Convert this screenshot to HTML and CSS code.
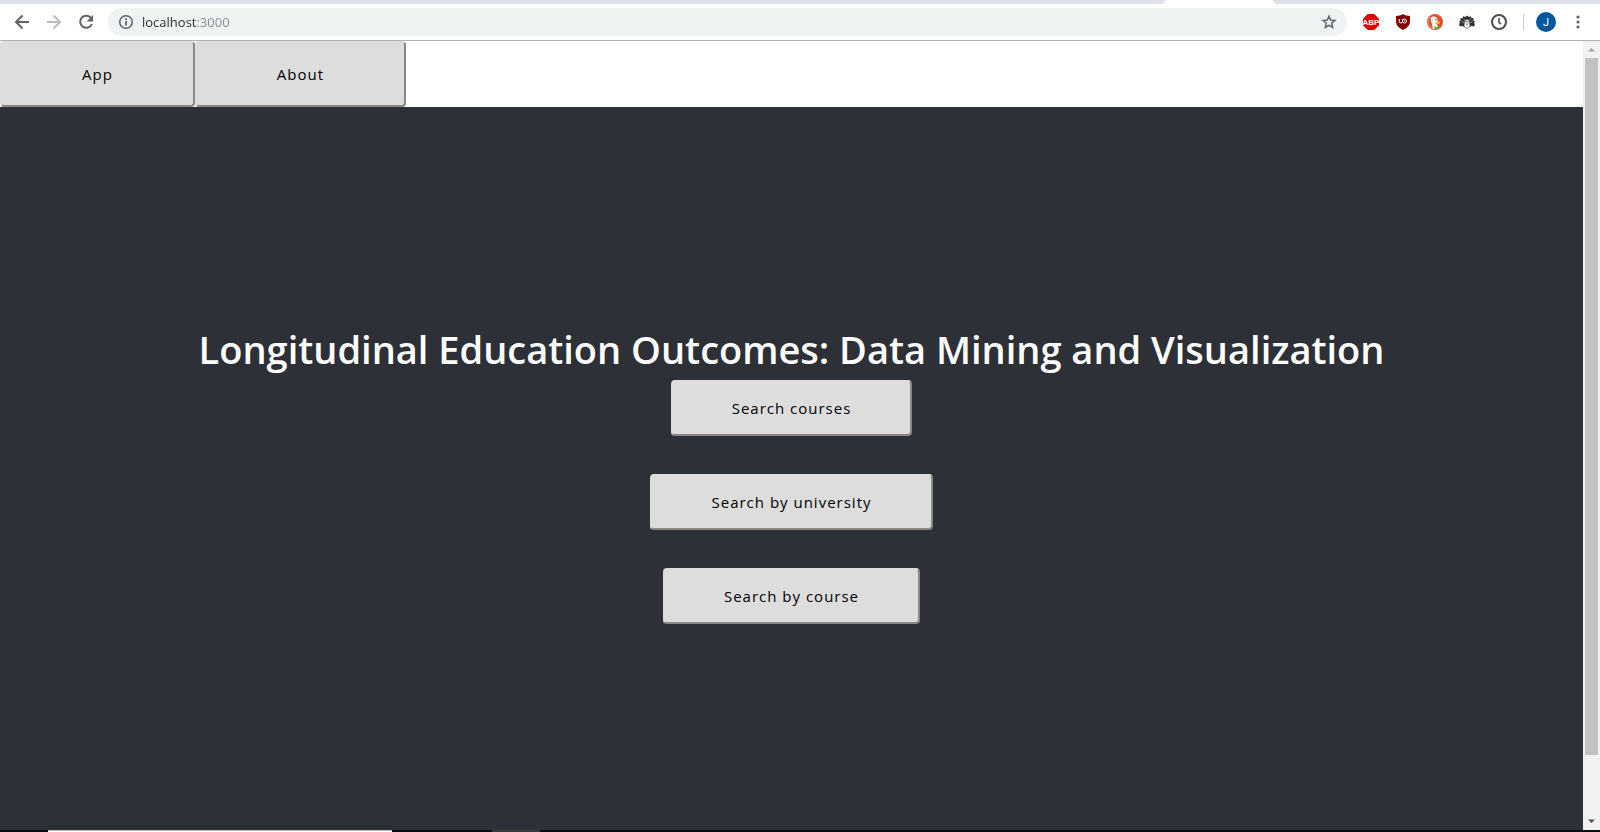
FILE: index.html
```html
<!DOCTYPE html>
<html lang="en">
<head>
<meta charset="utf-8">
<title>Longitudinal Education Outcomes</title>
<link rel="stylesheet" href="styles.css">
</head>
<body>
<div class="tabstrip"><div class="tabs-before"></div><div class="tabs-after"></div></div>
<header class="toolbar">
  <button class="icon-btn" aria-label="Back"><svg width="16" height="16" viewBox="0 0 16 16" fill="none" stroke="#5f6368" stroke-width="2"><path d="M15 8H2.500M8.500 1.500L2 8l6.500 6.500"/></svg></button>
  <button class="icon-btn" aria-label="Forward"><svg width="16" height="16" viewBox="0 0 16 16" fill="none" stroke="#babcbe" stroke-width="2"><path d="M1 8h12.500M7.500 1.500L14 8l-6.500 6.500"/></svg></button>
  <button class="icon-btn" aria-label="Reload"><svg width="16" height="16" viewBox="0 0 16 16"><path d="M13.200 4.200A6.100 6.100 0 1 0 13.900 10" fill="none" stroke="#5f6368" stroke-width="2"/><path d="M15 1v6.500H8.500z" fill="#5f6368"/></svg></button>
  <div class="omnibox">
    <svg width="16" height="16" viewBox="0 0 16 16" fill="none" stroke="#5f6368"><circle cx="8" cy="8" r="6.300" stroke-width="1.500"/><path d="M8 7v4.500M8 4.200v1.700" stroke-width="1.800"/></svg>
    <input class="url" type="text" value="localhost:3000" aria-label="Address">
    <button class="icon-btn" aria-label="Bookmark"><svg width="16" height="16" viewBox="0 0 16 16" fill="none" stroke="#5f6368" stroke-width="1.500"><path d="M8 2.200l1.700 3.900 4.200.4-3.200 2.800 1 4.200L8 11.300l-3.700 2.200 1-4.200-3.200-2.800 4.200-.4z"/></svg></button>
  </div>
  <div class="extensions">
    <button class="icon-btn" aria-label="Adblock Plus"><svg width="16" height="16" viewBox="0 0 16 16"><path d="M4.700 0h6.600L16 4.700v6.600L11.300 16H4.700L0 11.300V4.700z" fill="#df0006"/><text class="abp" x="8" y="11" text-anchor="middle">ABP</text></svg></button>
    <button class="icon-btn" aria-label="uBlock Origin"><svg width="16" height="16" viewBox="0 0 16 16"><path d="M8 0c2 1.500 4.500 1.900 7 1.900V7c0 4.500-2.500 6.500-7 9-4.500-2.500-7-4.500-7-9V1.900C3.500 1.900 6 1.500 8 0z" fill="#800000"/><path d="M4.300 5v2.500q0 1.500 1.500 1.500T7.500 7.500V5M7.500 7a2 2 0 1 0 4 0 2 2 0 1 0-4 0M9.500 6.500v1" fill="none" stroke="#fff"/></svg></button>
    <button class="icon-btn" aria-label="DuckDuckGo"><svg width="16" height="16" viewBox="0 0 16 16"><circle cx="8" cy="8" r="8" fill="#de4f2b"/><path d="M6 14.800A7 7 0 0 1 3.500 3" fill="none" stroke="#f2ab94" stroke-width=".8"/><path d="M6 14.800L4 6.500Q3 3 5.500 2.500 10 2 10.600 6L10 10l1 3-2 2z" fill="#fff"/><path d="M5.500 5h1.200" stroke="#9aa7c4" stroke-width=".8"/><circle cx="9" cy="5.700" r=".8" fill="#2d4f8e"/><path d="M8 8.500l5-1v1.700L9 10.500l-1-.6z" fill="#fdc20a"/><path d="M7.500 12l2 1 2.500-1v3l-2.500-.6-2 1z" fill="#4cae45"/></svg></button>
    <button class="icon-btn" aria-label="Privacy extension"><svg width="16" height="16" viewBox="0 0 16 16"><path d="M1 12.500L0 10l1-1-.8-2 1.500-.5L1.500 4l2 .2.500-2L6 3l2-1.500L10 3l2-.8.500 2 2-.2-.2 2.500 1.500.5L15 9l1 1-1 2.500-2.500-.5L11 13H5l-1.500-1z" fill="#333"/><path d="M5 12l.5-3.800a2.500 2.700 0 0 1 5 0L11 12l-1.500 2h-3z" fill="#fff" stroke="#444" stroke-width=".6"/><path d="M7 7v1.300M9 7v1.300M8 9.300v2" stroke="#333"/><path d="M2.500 7.500l2.200 1M4.500 4.800L6 6.500M11.500 4.800L10 6.500M13.500 7.500l-2.200 1" stroke="#ccc" stroke-width=".7"/></svg></button>
    <button class="icon-btn" aria-label="History"><svg width="16" height="16" viewBox="0 0 16 16" fill="none" stroke="#4d4d4d"><circle cx="8" cy="8" r="7" stroke-width="2"/><path d="M8 4v4.300l2 1.800" stroke-width="1.600"/></svg></button>
  </div>
  <div class="profile">
    <button class="avatar" aria-label="Profile J">J</button>
    <button class="icon-btn" aria-label="Menu"><svg width="16" height="16" viewBox="0 0 16 16" fill="#5f6368"><circle cx="8" cy="3" r="1.600"/><circle cx="8" cy="8" r="1.600"/><circle cx="8" cy="13" r="1.600"/></svg></button>
  </div>
</header>
<div class="viewport">
  <div class="page">
    <nav class="nav">
      <button class="btn btn-nav">App</button>
      <button class="btn btn-nav">About</button>
    </nav>
    <main class="hero">
      <h1 class="title">Longitudinal Education Outcomes: Data Mining and Visualization</h1>
      <div class="actions">
        <button class="btn">Search courses</button>
        <button class="btn">Search by university</button>
        <button class="btn">Search by course</button>
      </div>
    </main>
  </div>
  <div class="scrollbar">
    <button class="scroll-arrow" aria-label="Scroll up"><svg width="9" height="5" viewBox="0 0 9 5"><path d="M1 4.500h7L4.500 1z" fill="#a3a3a3"/></svg></button>
    <div class="scroll-track"><div class="scroll-thumb"></div></div>
    <button class="scroll-arrow" aria-label="Scroll down"><svg width="9" height="5" viewBox="0 0 9 5"><path d="M1 .5h7L4.500 4z" fill="#505050"/></svg></button>
  </div>
</div>
<footer class="taskbar"><div class="task-search"></div><div class="task-active"></div></footer>
</body>
</html>
```
FILE: styles.css
```css
* { box-sizing: border-box; }

body {
  margin: 0;
  height: 100vh;
  display: flex;
  flex-direction: column;
  overflow: hidden;
  background: #fff;
  font-family: "Open Sans", "Noto Sans", sans-serif;
}

button {
  border: 0;
  padding: 0;
  background: none;
  font-family: inherit;
}

.tabstrip {
  display: flex;
  justify-content: space-between;
  height: 4px;
}

.tabs-before,
.tabs-after { background: #dee1e9; }

.tabs-before {
  flex: 1;
  margin-right: 108px;
  border-bottom-right-radius: 6px;
}

.tabs-after {
  width: 327px;
  border-bottom-left-radius: 6px;
}

.toolbar {
  display: flex;
  align-items: center;
  gap: 16px;
  height: 37px;
  padding: 0 14px;
  border-bottom: 1px solid #b0b0b0;
}

.icon-btn {
  display: flex;
  width: 16px;
  height: 16px;
}

.omnibox {
  flex: 1;
  display: flex;
  align-items: center;
  gap: 8px;
  height: 28px;
  margin-left: -2px;
  padding: 0 10px;
  border-radius: 14px;
  background: #f0f3f4;
}

.url {
  flex: 1;
  border: 0;
  padding: 0;
  outline: 0;
  font: 13px "Open Sans", "Noto Sans", sans-serif;
  color: transparent;
  background: linear-gradient(to right, #24282c 55px, #858a8e 55px);
  -webkit-background-clip: text;
  background-clip: text;
}

.extensions {
  display: flex;
  gap: 16px;
  height: 16px;
  padding-right: 16px;
  border-right: 1px solid #c8cacc;
}

.abp {
  font: bold 8px "Liberation Sans", sans-serif;
  fill: #fff;
}

.profile {
  display: flex;
  align-items: center;
  gap: 14px;
  margin-left: -4px;
}

.avatar {
  width: 20px;
  height: 20px;
  border-radius: 50%;
  background: #01579b;
  color: #fff;
  font-family: Roboto, sans-serif;
  font-size: 11px;
}

.viewport {
  flex: 1;
  display: flex;
  min-height: 0;
}

.page {
  flex: 1;
  display: flex;
  flex-direction: column;
  min-width: 0;
}

.nav { display: flex; }

.btn {
  padding: 15px 59px;
  border: 2px solid;
  border-color: #ddd #888 #888 #ddd;
  border-radius: 4px;
  background: #ddd;
  color: #000;
  font-size: 15px;
  line-height: 22px;
  letter-spacing: 1px;
}

.btn-nav { padding: 20px 80px; }

.hero {
  flex: 1;
  display: flex;
  flex-direction: column;
  align-items: center;
  padding-top: 218px;
  background: #2d3137;
}

.title {
  margin: 0;
  padding-bottom: 6px;
  color: #fff;
  font-size: 38px;
  font-weight: 600;
  line-height: 49px;
  white-space: nowrap;
}

.actions {
  display: flex;
  flex-direction: column;
  align-items: center;
  gap: 38px;
}

.scrollbar {
  display: flex;
  flex-direction: column;
  width: 17px;
  background: #f1f1f1;
}

.scroll-arrow {
  display: flex;
  align-items: center;
  justify-content: center;
  height: 17px;
}

.scroll-track {
  flex: 1;
  padding: 0 2px;
}

.scroll-thumb {
  height: 92.3%;
  background: #c1c1c1;
}

.taskbar {
  display: flex;
  gap: 100px;
  height: 2px;
  padding-left: 48px;
  background: #080c12;
}

.task-search {
  width: 344px;
  border-top: 1px solid #bbb;
  background: #fff;
}

.task-active {
  width: 48px;
  background: #3a3b3e;
}
```
